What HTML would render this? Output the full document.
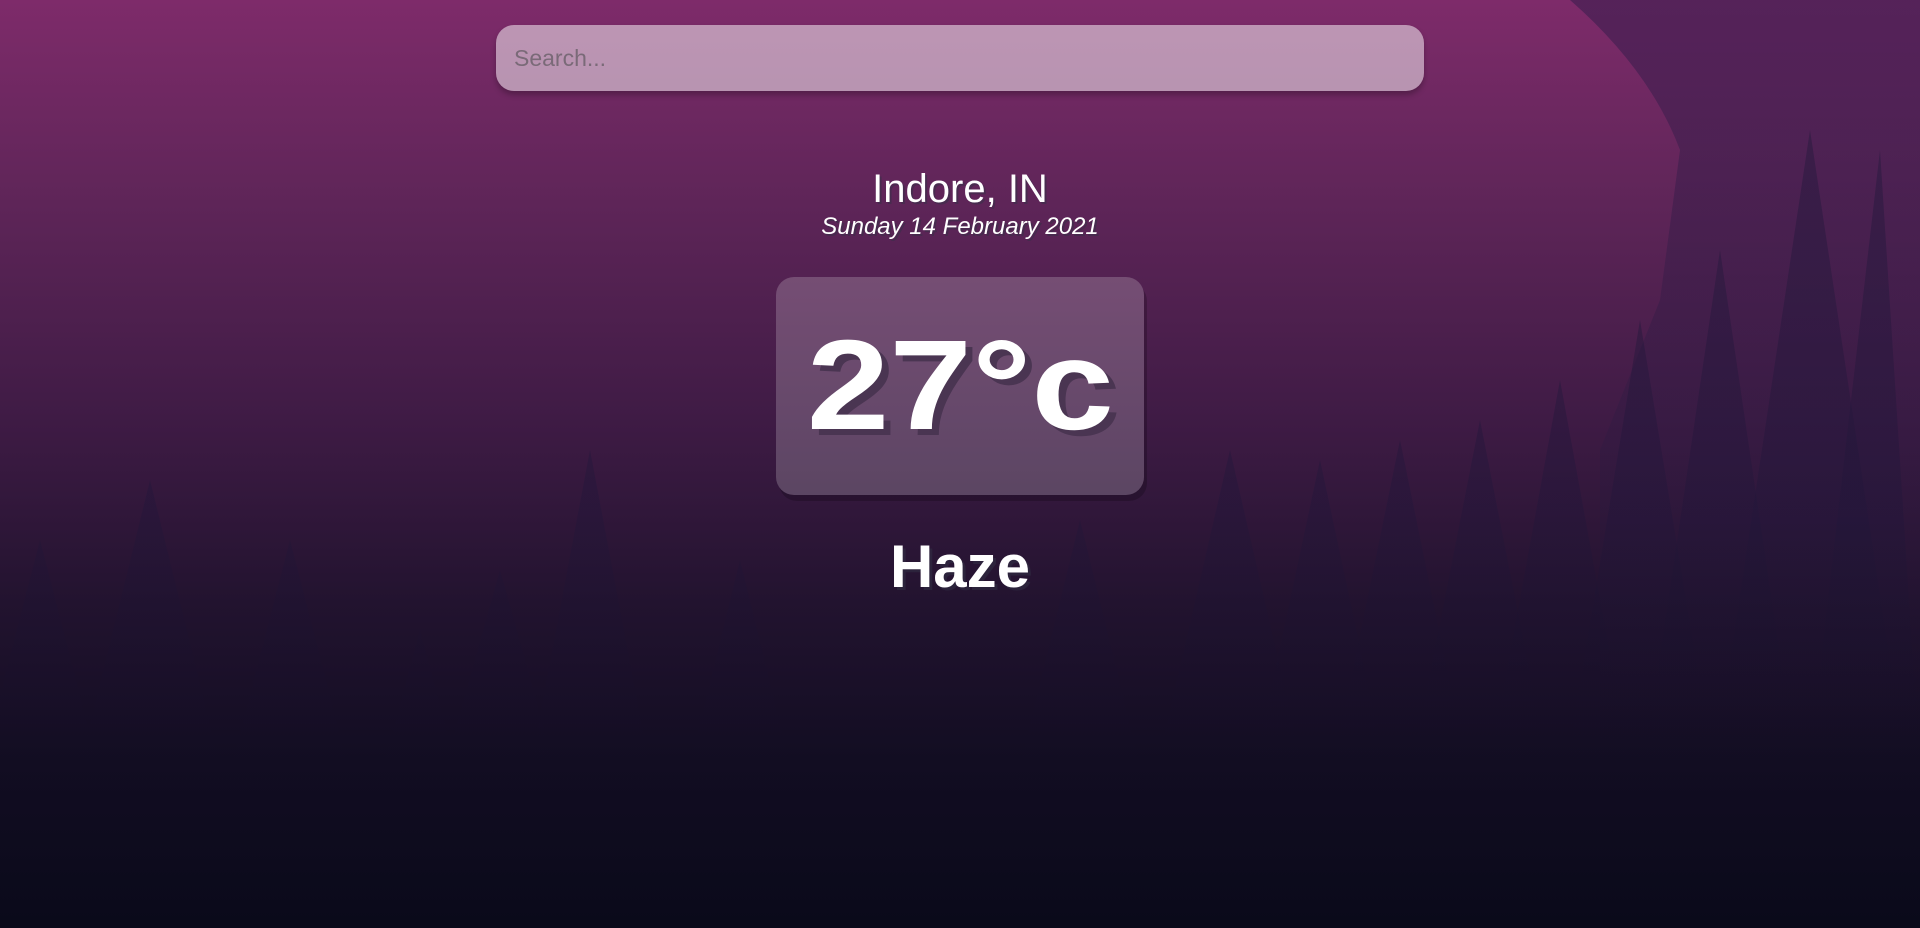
<!DOCTYPE html>
<html><head><meta charset="utf-8"><style>
html,body{margin:0;width:1920px;height:928px;overflow:hidden;font-family:"Liberation Sans",Arial,sans-serif}
body{background:linear-gradient(180deg,#7e2b6a 0%,#5e2558 22%,#3f1b45 45%,#22132f 65%,#120d22 82%,#0a0a1a 100%);position:relative}
svg.bg{position:absolute;left:0;top:0}
.search{position:absolute;left:496px;top:25px;width:928px;height:66px;border-radius:18px;background:rgba(255,255,255,0.5);box-shadow:0 4px 6px rgba(0,0,0,0.25);box-sizing:border-box;padding-left:18px;line-height:66px;font-size:23px;color:#7a6a78}
.loc{position:absolute;left:0;width:1920px;text-align:center;color:#fff;text-shadow:2px 2px rgba(50,50,70,0.5)}
.city{top:167px;font-size:40px}
.date{top:213px;font-size:24px;font-style:italic}
.temp{position:absolute;left:776px;top:277px;width:368px;height:218px;border-radius:18px;background:rgba(255,255,255,0.2);box-shadow:3px 6px rgba(0,0,0,0.2);text-align:center;color:#fff;font-weight:900;font-size:128px;line-height:218px;text-shadow:6px 6px #4a3552}
.temp span{display:inline-block;transform:scaleX(1.16)}
.haze{position:absolute;left:0;width:1920px;top:532px;text-align:center;color:#fff;font-weight:700;font-size:60px;text-shadow:3px 3px rgba(50,50,70,0.5)}
</style></head><body>
<svg class="bg" width="1920" height="928" viewBox="0 0 1920 928">
<defs>
<linearGradient id="tg" x1="0" y1="0" x2="0" y2="928" gradientUnits="userSpaceOnUse">
<stop offset="0.1" stop-color="#2a1a40" stop-opacity="0.55"/>
<stop offset="0.55" stop-color="#22163a" stop-opacity="0.45"/>
<stop offset="0.85" stop-color="#120d22" stop-opacity="0"/>
</linearGradient>
<linearGradient id="bg2" x1="0" y1="0" x2="0" y2="928" gradientUnits="userSpaceOnUse">
<stop offset="0" stop-color="#3a1d4e" stop-opacity="0.6"/>
<stop offset="0.5" stop-color="#2a1a40" stop-opacity="0.3"/>
<stop offset="0.8" stop-color="#1a1230" stop-opacity="0"/>
</linearGradient>
</defs>
<path d="M1570 0 Q1650 70 1680 150 L1660 300 L1600 450 L1600 928 L1920 928 L1920 0Z" fill="url(#bg2)"/>
<g fill="url(#tg)">
<polygon points="1810,130 1690,928 1930,928"/><polygon points="1880,150 1790,928 1930,928"/>
<polygon points="1720,250 1620,928 1820,928"/><polygon points="1640,320 1540,928 1740,928"/>
<polygon points="1560,380 1460,928 1660,928"/><polygon points="1480,420 1380,928 1580,928"/>
<polygon points="1400,440 1300,928 1500,928"/><polygon points="1320,460 1220,928 1420,928"/>
<polygon points="1230,450 1120,928 1340,928"/><polygon points="1080,520 980,928 1180,928"/>
<polygon points="150,480 40,928 260,928"/><polygon points="40,540 -60,928 140,928"/>
<polygon points="290,540 190,928 390,928"/><polygon points="500,570 400,928 600,928"/>
<polygon points="590,450 500,928 680,928"/><polygon points="740,560 650,928 830,928"/>
<polygon points="420,630 340,928 500,928"/>
</g>
</svg>
<div class="search">Search...</div>
<div class="loc city">Indore, IN</div>
<div class="loc date">Sunday 14 February 2021</div>
<div class="temp"><span>27°c</span></div>
<div class="haze">Haze</div>
</body></html>
